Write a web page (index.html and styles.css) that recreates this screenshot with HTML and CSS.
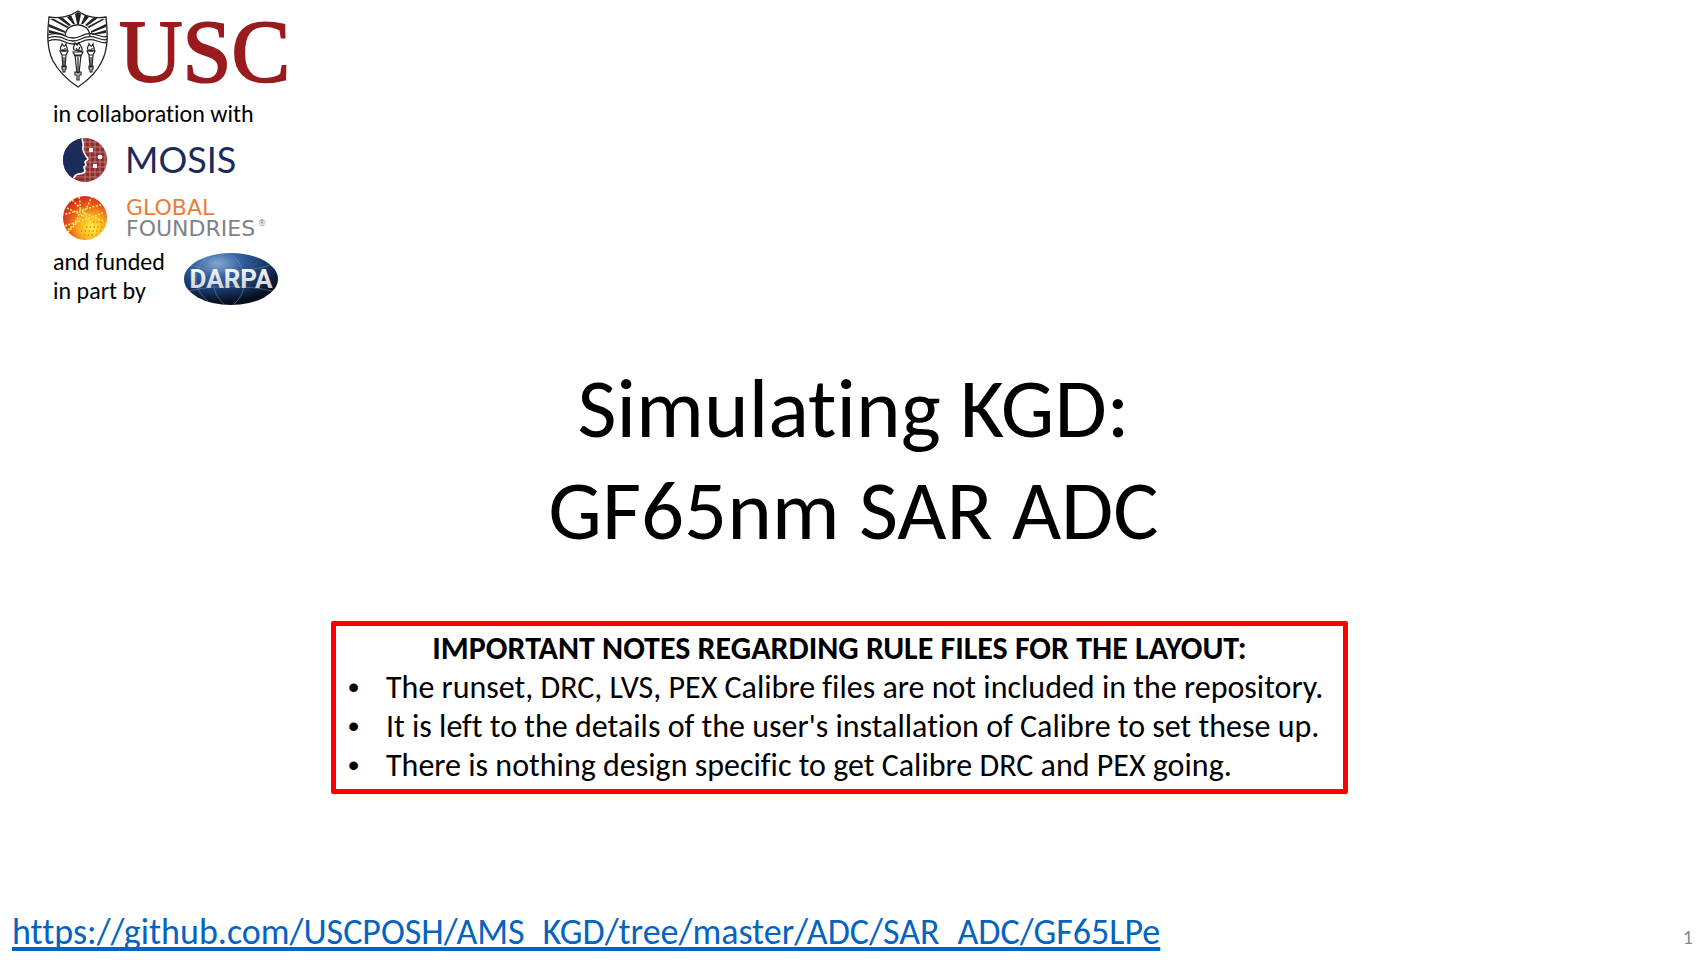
FILE: index.html
```html
<!DOCTYPE html>
<html lang="en">
<head>
<meta charset="utf-8">
<title>Simulating KGD: GF65nm SAR ADC</title>
<link rel="stylesheet" href="styles.css">
</head>
<body>
<div class="slide">
  <header class="brands">
    <svg width="250" height="99" viewBox="0 -10 250 99" role="img" aria-label="USC">
      <g fill="none" stroke="#222" stroke-width="1.3">
        <path d="M31 1C24 6 13 9 2 7C0 25 0 39 6 51C12 62 22 71 31 77C40 71 50 62 55 51C61 39 61 25 59 7C48 9 37 6 31 1Z" fill="#fff"/>
        <path d="M18 26C19 11 42 11 43 26"/>
        <path d="M1 25Q10 22 18 26T34 26T50 25T60 26M1 28Q10 25 18 29T34 29T50 28T60 29M1 31Q10 28 18 32T34 32T50 31T60 32"/>
      </g>
      <path fill="#222" d="M30 14L28 4L31 2L34 4L32 14ZM26 14L20 7L24 5L28 14ZM36 14L42 7L38 5L34 14ZM22 16L11 8L16 8L24 15ZM40 16L51 8L46 8L38 15ZM20 18L3 9L7 9L22 17ZM42 18L58 9L55 9L40 17ZM18 21L2 14V17L18 23ZM44 21L59 14V17L44 23ZM17 24L2 20V23L16 25ZM45 24L59 20V23L45 25Z"/>
      <g fill="#fff" stroke="#222" stroke-width="1.2">
        <path d="M28 45L30 63H32L34 45ZM26 42H36L34 46H28ZM28 62H34V65H32V70H30V65H28ZM27 40C25 36 28 36 28 33C31 36 30 36 32 32C32 36 36 35 35 41Z"/>
        <path d="M15 45L16 57H18L19 45ZM13 41H21L19 45H15ZM15 56H19V59H18V62H16V59H15ZM14 40C12 37 15 36 15 34C18 37 17 37 19 34C19 37 21 37 20 41Z"/>
        <path d="M42 45L43 57H45L46 45ZM40 41H48L46 45H42ZM42 56H46V59H45V62H43V59H42ZM41 40C39 37 42 36 42 34C45 37 44 37 46 34C46 37 48 37 47 41Z"/>
        <path d="M31 47V62M29 38L31 41L33 37M17 47V56M44 47V56M16 39V42M18 38V42M43 39V42M45 38V42" fill="none"/>
      </g>
      <text class="usc-word" x="72" y="71">USC</text>
    </svg>
    <p class="credit">in collaboration with</p>
    <svg class="logo-partner" width="240" height="46" viewBox="0 0 240 46" role="img" aria-label="MOSIS">
      <defs><clipPath id="face"><circle cx="23" cy="23" r="22"/></clipPath></defs>
      <g clip-path="url(#face)">
        <rect width="46" height="46" fill="#8e2b2c"/>
        <path d="M23 0V46M28 0V46M33 0V46M38 0V46M43 0V46M18 5H46M18 10H46M18 15H46M18 20H46M18 25H46M18 30H46M18 35H46M12 40H46" stroke="#c58a87" stroke-width=".8"/>
        <path d="M0 0H20C20 4 22 7 21 10C20 13 23 18 26 22C25 24 23 24 23 25L24 28L22 30L23 34C22 38 16 36 14 38C11 40 12 43 9 45H0Z" fill="#1b2c5b" stroke="#fff" stroke-width="1.6"/>
        <path d="M27 11H31V15H27ZM36 18H40V22H36ZM31 27H35V31H31Z" fill="#fff"/>
      </g>
      <text class="mosis-word" x="63" y="36">MOSIS</text>
    </svg>
    <svg class="logo-partner logo-gf" width="240" height="46" viewBox="0 0 240 46" role="img" aria-label="Global Foundries">
      <defs>
        <radialGradient id="sun" cx="65%" cy="72%" r="75%"><stop offset="0" stop-color="#fff04a"/><stop offset=".35" stop-color="#fbb51c"/><stop offset=".7" stop-color="#ea5a1e"/><stop offset="1" stop-color="#cf2620"/></radialGradient>
        <clipPath id="globe"><circle cx="23" cy="23" r="22"/></clipPath>
      </defs>
      <circle cx="23" cy="23" r="22" fill="url(#sun)"/>
      <g clip-path="url(#globe)" fill="none">
        <path d="M0 20L42 9M3 31L41 18M17 2C21 18 15 29 3 37M10 5C22 16 30 27 34 42M30 1C24 16 16 28 5 38M20 17L45 28M5 13L24 22" stroke="#ffe35c" stroke-width="1.6" stroke-dasharray="2 1.5"/>
        <path d="M19 36H42M24 32H45M22 40H38M31 27H45" stroke="#c28b17" stroke-width="1.3" stroke-dasharray="1.3 2.5"/>
      </g>
      <text class="gf-word gf-global" x="64" y="20">GLOBAL</text>
      <text class="gf-word gf-foundries" x="64" y="41">FOUNDRIES</text>
      <text class="gf-mark" x="196" y="31">®</text>
    </svg>
    <div class="funding">
      <p class="credit">and funded<br>in part by</p>
      <svg class="logo-darpa" width="96" height="54" viewBox="0 0 96 54" role="img" aria-label="DARPA">
        <defs>
          <radialGradient id="orb" cx="36%" cy="20%" r="75%"><stop offset="0" stop-color="#86a9d3"/><stop offset=".35" stop-color="#315f9f"/><stop offset=".7" stop-color="#173766"/><stop offset="1" stop-color="#07101f"/></radialGradient>
          <linearGradient id="steel" x1="0" y1="0" x2="0" y2="1"><stop offset="0" stop-color="#fff"/><stop offset="1" stop-color="#c5c7ca"/></linearGradient>
        </defs>
        <ellipse cx="48" cy="27" rx="47" ry="26" fill="url(#orb)"/>
        <path d="M42 1C26 15 26 40 42 53M46 1C66 14 66 40 50 53M8 13C30 21 65 21 87 13M6 39C30 33 65 33 89 39M25 4C9 18 9 36 25 49" fill="none" stroke="#7897bd" stroke-opacity=".5"/>
        <text class="darpa-word" x="48" y="36" fill="url(#steel)">DARPA</text>
      </svg>
    </div>
  </header>
  <main class="content">
    <h1 class="title">Simulating KGD:<br>GF65nm SAR ADC</h1>
    <section class="notes">
      <h2 class="notes-title">IMPORTANT NOTES REGARDING RULE FILES FOR THE LAYOUT:</h2>
      <ul class="notes-list">
        <li>The runset, DRC, LVS, PEX Calibre files are not included in the repository.</li>
        <li>It is left to the details of the user's installation of Calibre to set these up.</li>
        <li>There is nothing design specific to get Calibre DRC and PEX going.</li>
      </ul>
    </section>
  </main>
  <footer class="footer">
    <a class="repo" href="https://github.com/USCPOSH/AMS_KGD/tree/master/ADC/SAR_ADC/GF65LPe">https://github.com/USCPOSH/AMS_KGD/tree/master/ADC/SAR_ADC/GF65LPe</a>
    <span class="page-number">1</span>
  </footer>
</div>
</body>
</html>
```

FILE: styles.css
```css
* { box-sizing: border-box; }
body { margin: 0; background: #fff; color: #000; font-family: Carlito, Lato, sans-serif; font-variant-ligatures: none; }
h1, h2, p, ul { margin: 0; padding: 0; font-weight: 400; }
svg { display: block; }
.slide { display: flex; flex-direction: column; min-height: 100vh; }

.brands { padding-left: 47px; }
.credit { padding-left: 6px; font-size: 24px; line-height: 29px; }
.logo-partner { margin: 9px 0 0 15px; }
.logo-gf { margin-top: 12px; }
.funding { display: flex; gap: 18px; margin-top: 6px; }
.logo-darpa { margin-top: 5px; }
.usc-word { font: 88px "Liberation Serif", serif; fill: #991b1e; stroke: #991b1e; stroke-width: 2px; }
.mosis-word { font: 36px Lato, sans-serif; fill: #1b2c5b; }
.gf-word { font: 22px "DejaVu Sans", sans-serif; }
.gf-global { fill: #ec7d36; }
.gf-foundries { fill: #808285; }
.gf-mark { font: 8px "DejaVu Sans", sans-serif; fill: #808285; }
.darpa-word { font: bold 26px Roboto, sans-serif; text-anchor: middle; }

.content { display: flex; flex-direction: column; align-items: center; padding-top: 51px; }
.title { font-size: 85px; line-height: 102px; text-align: center; }
.notes { width: 1017px; max-width: 100%; margin: 60px 28px 0 0; padding: 3px 12px 4px; border: 5px solid #f00; border-radius: 2px; }
.notes-title { font-size: 32px; line-height: 39px; font-weight: 700; text-align: center; }
.notes-list { list-style: none; font-size: 32px; line-height: 39px; }
.notes-list li { display: flex; }
.notes-list li::before { content: "•"; flex: none; width: 38px; font-family: "Liberation Sans", sans-serif; }

.footer { display: flex; justify-content: space-between; align-items: baseline; margin-top: auto; padding: 0 14px 8px 12px; }
.repo { color: #0563c1; font-size: 36px; line-height: 40px; text-decoration-thickness: 4px; text-underline-offset: 3px; text-decoration-skip-ink: none; }
.page-number { color: #898989; font-size: 20px; }
```
